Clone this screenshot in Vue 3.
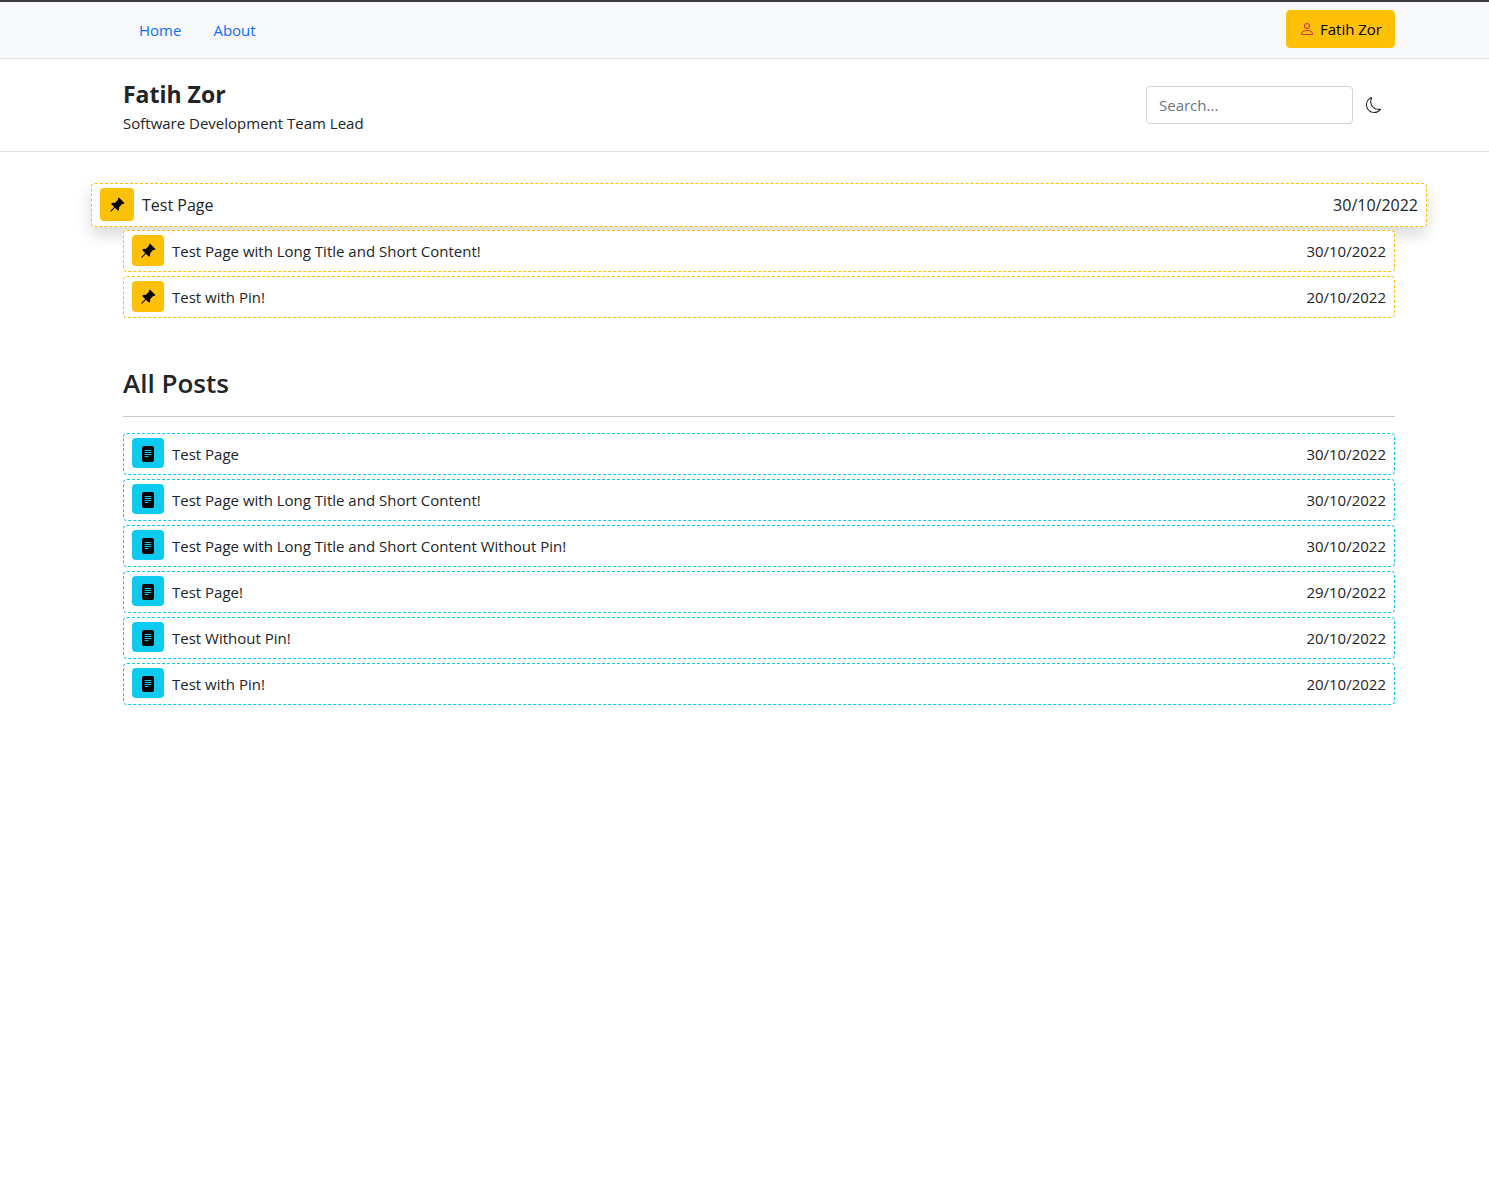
<script setup>
const pinned = [
  { title: 'Test Page', date: '30/10/2022', active: true },
  { title: 'Test Page with Long Title and Short Content!', date: '30/10/2022' },
  { title: 'Test with Pin!', date: '20/10/2022' },
]

const posts = [
  { title: 'Test Page', date: '30/10/2022' },
  { title: 'Test Page with Long Title and Short Content!', date: '30/10/2022' },
  { title: 'Test Page with Long Title and Short Content Without Pin!', date: '30/10/2022' },
  { title: 'Test Page!', date: '29/10/2022' },
  { title: 'Test Without Pin!', date: '20/10/2022' },
  { title: 'Test with Pin!', date: '20/10/2022' },
]
</script>

<template>
  <div class="page">
    <nav class="topbar">
      <div class="links">
        <a href="#">Home</a>
        <a href="#">About</a>
      </div>
      <button type="button" class="account">
        <svg class="icon person" viewBox="0 0 16 16" aria-hidden="true">
          <path d="M8 8a3 3 0 1 0 0-6 3 3 0 0 0 0 6zm2-3a2 2 0 1 1-4 0 2 2 0 0 1 4 0zm4 8c0 1-1 1-1 1H3s-1 0-1-1 1-4 6-4 6 3 6 4zm-1-.004c-.001-.246-.154-.986-.832-1.664C11.516 10.68 10.289 10 8 10c-2.29 0-3.516.68-4.168 1.332-.678.678-.83 1.418-.832 1.664h10z" />
        </svg>
        <span>Fatih Zor</span>
      </button>
    </nav>

    <header class="masthead">
      <div>
        <h1>Fatih Zor</h1>
        <p>Software Development Team Lead</p>
      </div>
      <div class="tools">
        <input type="search" placeholder="Search..." aria-label="Search" />
        <button type="button" class="theme" aria-label="Toggle dark mode">
          <svg class="icon" viewBox="0 0 16 16" aria-hidden="true">
            <path d="M6 .278a.768.768 0 0 1 .08.858 7.208 7.208 0 0 0-.878 3.46c0 4.021 3.278 7.277 7.318 7.277.527 0 1.04-.055 1.533-.16a.787.787 0 0 1 .81.316.733.733 0 0 1-.031.893A8.349 8.349 0 0 1 8.344 16C3.734 16 0 12.286 0 7.71 0 4.266 2.114 1.312 5.124.06A.752.752 0 0 1 6 .278zM4.858 1.311A7.269 7.269 0 0 0 1.025 7.71c0 4.02 3.279 7.276 7.319 7.276a7.316 7.316 0 0 0 5.205-2.162c-.337.042-.68.063-1.029.063-4.61 0-8.343-3.714-8.343-8.29 0-1.167.242-2.278.681-3.286z" />
          </svg>
        </button>
      </div>
    </header>

    <main>
      <section class="list pinned" aria-label="Pinned posts">
        <a v-for="post in pinned" :key="post.title" href="#" class="row" :class="{ active: post.active }">
          <span class="badge">
            <svg class="icon" viewBox="0 0 16 16" aria-hidden="true">
              <path d="M9.828.722a.5.5 0 0 1 .354.146l4.95 4.95a.5.5 0 0 1 0 .707c-.48.48-1.072.588-1.503.588-.177 0-.335-.018-.46-.039l-3.134 3.134a5.927 5.927 0 0 1 .16 1.013c.046.702-.032 1.687-.72 2.375a.5.5 0 0 1-.707 0l-2.829-2.828-3.182 3.182c-.195.195-1.219.902-1.414.707-.195-.195.512-1.22.707-1.414l3.182-3.182-2.828-2.829a.5.5 0 0 1 0-.707c.688-.688 1.673-.767 2.375-.72a5.922 5.922 0 0 1 1.013.16l3.134-3.133a2.772 2.772 0 0 1-.04-.461c0-.43.108-1.022.589-1.503a.5.5 0 0 1 .353-.146z" />
            </svg>
          </span>
          <span class="title">{{ post.title }}</span>
          <time>{{ post.date }}</time>
        </a>
      </section>

      <h2>All Posts</h2>

      <section class="list posts" aria-label="All posts">
        <a v-for="post in posts" :key="post.title" href="#" class="row">
          <span class="badge">
            <svg class="icon" viewBox="0 0 16 16" aria-hidden="true">
              <path d="M12 0H4a2 2 0 0 0-2 2v12a2 2 0 0 0 2 2h8a2 2 0 0 0 2-2V2a2 2 0 0 0-2-2zM5 4h6a.5.5 0 0 1 0 1H5a.5.5 0 0 1 0-1zm-.5 2.5A.5.5 0 0 1 5 6h6a.5.5 0 0 1 0 1H5a.5.5 0 0 1-.5-.5zM5 8h6a.5.5 0 0 1 0 1H5a.5.5 0 0 1 0-1zm0 2h3a.5.5 0 0 1 0 1H5a.5.5 0 0 1 0-1z" />
            </svg>
          </span>
          <span class="title">{{ post.title }}</span>
          <time>{{ post.date }}</time>
        </a>
      </section>
    </main>
  </div>
</template>

<style>
body {
  margin: 0;
  background: #fff;
}
</style>

<style scoped>
.page {
  border-top: 2px solid #3b3b3e;
  color: #212529;
  font-family: "Segoe UI", "Open Sans", "Noto Sans", sans-serif;
  font-size: 15px;
  line-height: 24px;
}

.page *,
.page {
  box-sizing: border-box;
}

.icon {
  display: block;
  flex: none;
  width: 16px;
  height: 16px;
  fill: currentColor;
}

.topbar,
.masthead,
main {
  padding: 0 94px 0 123px;
}

.topbar,
.masthead {
  display: flex;
  align-items: center;
  justify-content: space-between;
  border-bottom: 1px solid #dee2e6;
}

.topbar {
  padding-top: 8px;
  padding-bottom: 10px;
  background: #f8f9fc;
}

.links {
  display: flex;
}

.links a {
  padding: 2px 16px 0;
  color: #0d6efd;
  text-decoration: none;
}

button,
input {
  font: inherit;
}

.account {
  display: flex;
  align-items: center;
  gap: 5px;
  height: 38px;
  padding: 0 12px;
  border: 1px solid #ffc107;
  border-radius: 4px;
  background: #ffc107;
  color: #000;
}

.person {
  color: #dc3545;
}

.masthead {
  padding-top: 18px;
  padding-bottom: 16px;
}

h1 {
  margin: 0;
  font-size: 23px;
  font-weight: 700;
  line-height: 34px;
}

p {
  margin: 0;
}

.tools {
  display: flex;
  align-items: center;
  padding-bottom: 2px;
}

input {
  width: 207px;
  height: 38px;
  padding: 0 12px;
  border: 1px solid #ced4da;
  border-radius: 4px;
  background: #fff;
  color: #212529;
}

input::placeholder {
  color: #6c757d;
  opacity: 1;
}

.theme {
  padding: 10px 13px;
  border: 0;
  background: none;
  color: #212529;
}

.list {
  display: flex;
  flex-direction: column;
  gap: 4px;
}

.pinned {
  --accent: #ffc107;
  padding-top: 31px;
}

.posts {
  --accent: #0dcaf0;
}

.row {
  display: flex;
  align-items: center;
  gap: 8px;
  height: 42px;
  padding: 0 8px;
  border: 1px dashed var(--accent);
  border-radius: 4px;
  background: #fff;
  color: #212529;
  text-decoration: none;
}

.row.active {
  height: 44px;
  margin: 0 -32px -1px;
  box-shadow: 0 8px 16px rgba(0, 0, 0, 0.15);
  font-size: 16px;
}

.badge {
  display: grid;
  place-items: center;
  width: 32px;
  height: 30px;
  margin-bottom: 2px;
  border-radius: 4px;
  background: var(--accent);
  color: #000;
}

.posts .badge {
  padding-top: 2px;
}

.pinned .badge {
  height: 31px;
  margin-bottom: 1px;
}

.pinned .active .badge {
  width: 34px;
  height: 33px;
}

.title {
  flex: 1;
}

h2 {
  margin: 45px 0 16px;
  padding-bottom: 13px;
  border-bottom: 1px solid #c8c9ca;
  font-size: 26px;
  font-weight: 600;
  line-height: 40px;
}
</style>
